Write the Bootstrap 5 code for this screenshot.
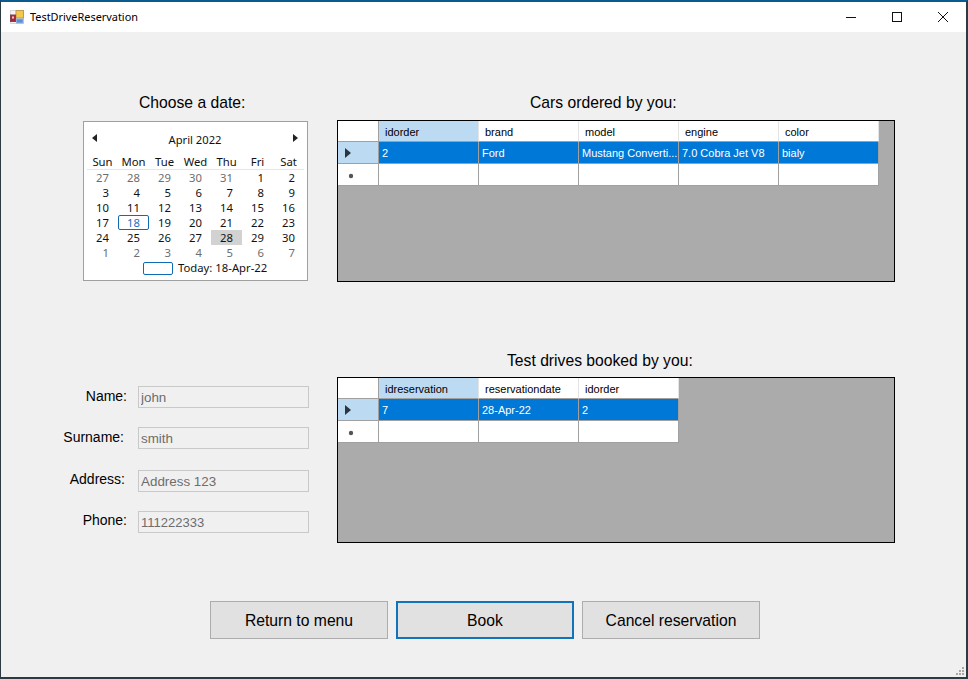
<!DOCTYPE html>
<html lang="en">
<head>
<meta charset="utf-8">
<title>TestDriveReservation</title>
<link href="https://cdn.jsdelivr.net/npm/bootstrap@5.3.0/dist/css/bootstrap.min.css" rel="stylesheet">
<style>
html,body{height:679px;margin:0;overflow:hidden;background:#f0f0f0}
body{font-family:"Liberation Sans",Arial,sans-serif;color:#000}
.win{width:968px;height:679px;border-top:2px solid #0a5c8f;border-left:1px solid #2c3a42;border-right:2px solid #2c3a42;border-bottom:2px solid #2c3a42;background:#f0f0f0;position:relative;overflow:hidden}
.tbar{height:30px;background:#fff;font-family:"Noto Sans",sans-serif;font-size:10.9px}
.tbar-ic{margin-left:9px;margin-right:6px}
.wbtns svg{display:block}
.wb{width:46px;height:30px}
.client{padding-left:82px}
.toprow{padding-top:61px;height:319px}
.botrow{height:250px;margin-left:-82px}
.leftcol{width:225px;flex:none}
.rightcol{width:558px;margin-left:29px;flex:none}
.botrow .rightcol{margin-left:27px}
.hd{font-size:15.7px;line-height:20px;height:20px;white-space:nowrap}
.hd-a{padding-left:56px;margin-bottom:8px}
.hd-b{padding-left:193px;margin-bottom:7px}
.hd-c{padding-left:170px;margin-bottom:6px}
.cal{width:225px;height:160px;background:#fff;border:1px solid #a0a0a0;padding-left:3px;font-family:"Noto Sans",sans-serif;font-size:11.3px;line-height:15px;color:#111}
.cal-t{width:216px;height:31px;padding:0 5px;font-size:11.2px}
.cal-t span{margin-top:3px}
.cal-g{display:grid;grid-template-columns:repeat(7,31px);grid-template-rows:17px repeat(6,15px)}
.cal-h{line-height:18px;text-align:center;border-bottom:1px solid #e6e6e6}
.cal-d{padding-right:9px;text-align:right}
.cal-m{color:#6d6d6d}
.cal-s{background:#d2d2d2}
.cal-n{color:#1a6fc0;border:1px solid #0f6cb4;border-radius:2px;padding-right:8px;line-height:13px}
.cal-f{height:16px;padding-left:56px;gap:5px;line-height:16px}
.cal-b{width:30px;height:13px;border:1px solid #0f6cb4;border-radius:2px;flex:none}
.dgv{background:#ababab;border:1px solid #000;width:558px}
.dgv-1{height:162px}
.dgv-2{height:166px}
.dgv table.grd{width:auto;table-layout:fixed;border-collapse:separate;border-spacing:0;margin:0;font-size:11px;--bs-table-bg:transparent;--bs-table-border-color:transparent}
.grd th,.grd td{width:100px;height:22px;padding:0 0 0 3px;background:#fff;border:0;border-right:1px solid #a0a0a0;border-bottom:1px solid #a0a0a0;font-weight:400;vertical-align:middle;white-space:nowrap;overflow:hidden;box-shadow:none;color:#000;line-height:14px}
.grd thead th{height:21px;padding:1px 0 0 6px;border-right:1px solid #e4e4e4;border-bottom:1px solid #a0a0a0}
.grd .rh{width:41px;padding:0 0 0 7px;border-right:1px solid #a0a0a0}
.grd thead th.sel,.grd tbody td.rh.sel{background:#bddaf3}
.grd tbody tr.cur td:not(.rh){background:#0078d7;color:#fff}
.newmark{margin:2px 0 0 3px}
.fields{width:309px;padding-top:35px;flex:none}
.frow{height:22px;margin-bottom:19px}
.frow-w{margin-bottom:21px}
.lbl{width:126px;font-size:14px;line-height:18px;text-align:right;flex:none;padding-bottom:2px}
.lbl-s{padding-right:3px}
.lbl-a{padding-right:2px;padding-bottom:4px}
.lbl-p{padding-bottom:4px}
.fld.form-control{width:171px;height:22px;margin-left:11px;padding:0 2px;border:1px solid #c9c9c9;border-radius:0;background:#f0f0f0;color:#6d6d6d;font-size:13.4px;line-height:20px;font-family:"Liberation Sans",Arial,sans-serif;opacity:1}
.fld.fld-p.form-control{font-size:13px}
.acts{margin-left:-82px;padding-left:209px;gap:8px}
.wbtn.btn{width:178px;height:38px;padding:1px 0 0;border:1px solid #adadad;border-radius:0;background:#e1e1e1;color:#000;font-size:15.7px;line-height:35px;--bs-btn-hover-bg:#e1e1e1}
.wbtn.wbtn-f{border:2px solid #1273ba;line-height:33px}
.grip{position:absolute;right:1px;bottom:1px}
</style>
</head>
<body>
<div class="win d-flex flex-column">
  <div class="tbar d-flex align-items-center">
    <svg class="tbar-ic" width="14" height="14" viewBox="0 0 14 14" aria-hidden="true">
      <rect x="0.5" y="0.5" width="13" height="13" fill="#f4f4f4" stroke="#d8d8d8"/>
      <rect x="6" y="0.5" width="7.5" height="7.5" fill="#f6c84a" stroke="#c09a50"/>
      <rect x="0.5" y="5" width="5" height="6.5" fill="#a82838" stroke="#8a4048"/>
      <rect x="2" y="6.5" width="2" height="2" fill="#f0d0d0"/>
      <rect x="6.5" y="9" width="6.5" height="4" fill="#5b8fd8" stroke="#8fb0dc"/>
    </svg>
    <span>TestDriveReservation</span>
    <div class="wbtns d-flex ms-auto">
      <div class="wb d-flex align-items-center justify-content-center"><svg width="10" height="10" viewBox="0 0 10 10"><path d="M0 5.5h10" stroke="#111" fill="none"/></svg></div>
      <div class="wb d-flex align-items-center justify-content-center"><svg width="10" height="10" viewBox="0 0 10 10"><rect x=".5" y=".5" width="9" height="9" stroke="#111" fill="none"/></svg></div>
      <div class="wb d-flex align-items-center justify-content-center"><svg width="10" height="10" viewBox="0 0 10 10"><path d="M0 0l10 10M10 0L0 10" stroke="#111" stroke-width="1" fill="none"/></svg></div>
    </div>
  </div>

  <div class="client flex-grow-1">
    <div class="toprow d-flex">
      <div class="leftcol">
        <div class="hd hd-a">Choose a date:</div>
        <div class="cal">
          <div class="cal-t d-flex align-items-center justify-content-between">
            <svg width="5" height="8" viewBox="0 0 5 8"><path d="M5 0v8L0 4z" fill="#222"/></svg>
            <span>April 2022</span>
            <svg width="5" height="8" viewBox="0 0 5 8"><path d="M0 0v8l5-4z" fill="#222"/></svg>
          </div>
          <div class="cal-g">
            <div class="cal-h">Sun</div><div class="cal-h">Mon</div><div class="cal-h">Tue</div><div class="cal-h">Wed</div><div class="cal-h">Thu</div><div class="cal-h">Fri</div><div class="cal-h">Sat</div>
            <div class="cal-d cal-m">27</div><div class="cal-d cal-m">28</div><div class="cal-d cal-m">29</div><div class="cal-d cal-m">30</div><div class="cal-d cal-m">31</div><div class="cal-d">1</div><div class="cal-d">2</div>
            <div class="cal-d">3</div><div class="cal-d">4</div><div class="cal-d">5</div><div class="cal-d">6</div><div class="cal-d">7</div><div class="cal-d">8</div><div class="cal-d">9</div>
            <div class="cal-d">10</div><div class="cal-d">11</div><div class="cal-d">12</div><div class="cal-d">13</div><div class="cal-d">14</div><div class="cal-d">15</div><div class="cal-d">16</div>
            <div class="cal-d">17</div><div class="cal-d cal-n">18</div><div class="cal-d">19</div><div class="cal-d">20</div><div class="cal-d">21</div><div class="cal-d">22</div><div class="cal-d">23</div>
            <div class="cal-d">24</div><div class="cal-d">25</div><div class="cal-d">26</div><div class="cal-d">27</div><div class="cal-d cal-s">28</div><div class="cal-d">29</div><div class="cal-d">30</div>
            <div class="cal-d cal-m">1</div><div class="cal-d cal-m">2</div><div class="cal-d cal-m">3</div><div class="cal-d cal-m">4</div><div class="cal-d cal-m">5</div><div class="cal-d cal-m">6</div><div class="cal-d cal-m">7</div>
          </div>
          <div class="cal-f d-flex align-items-center"><span class="cal-b"></span><span>Today: 18-Apr-22</span></div>
        </div>
      </div>
      <div class="rightcol">
        <div class="hd hd-b">Cars ordered by you:</div>
        <div class="dgv dgv-1">
          <table class="table grd">
            <thead><tr><th class="rh"></th><th class="sel">idorder</th><th>brand</th><th>model</th><th>engine</th><th>color</th></tr></thead>
            <tbody>
              <tr class="cur"><td class="rh sel"><svg width="6" height="10" viewBox="0 0 6 10" class="d-block"><path d="M0 0v10l6-5z" fill="#2a3540"/></svg></td><td>2</td><td>Ford</td><td>Mustang Converti...</td><td>7.0 Cobra Jet V8</td><td>bialy</td></tr>
              <tr><td class="rh"><svg class="newmark d-block" width="6" height="6" viewBox="0 0 6 6"><circle cx="3" cy="3" r="2.2" fill="#555"/></svg></td><td></td><td></td><td></td><td></td><td></td></tr>
            </tbody>
          </table>
        </div>
      </div>
    </div>

    <div class="botrow d-flex">
      <div class="fields">
        <div class="frow d-flex align-items-center"><label class="lbl">Name:</label><input class="form-control fld" disabled value="john"></div>
        <div class="frow frow-w d-flex align-items-center"><label class="lbl lbl-s">Surname:</label><input class="form-control fld" disabled value="smith"></div>
        <div class="frow d-flex align-items-center"><label class="lbl lbl-a">Address:</label><input class="form-control fld" disabled value="Address 123"></div>
        <div class="frow d-flex align-items-center"><label class="lbl lbl-p">Phone:</label><input class="form-control fld fld-p" disabled value="111222333"></div>
      </div>
      <div class="rightcol">
        <div class="hd hd-c">Test drives booked by you:</div>
        <div class="dgv dgv-2">
          <table class="table grd">
            <thead><tr><th class="rh"></th><th class="sel">idreservation</th><th>reservationdate</th><th>idorder</th></tr></thead>
            <tbody>
              <tr class="cur"><td class="rh sel"><svg width="6" height="10" viewBox="0 0 6 10" class="d-block"><path d="M0 0v10l6-5z" fill="#2a3540"/></svg></td><td>7</td><td>28-Apr-22</td><td>2</td></tr>
              <tr><td class="rh"><svg class="newmark d-block" width="6" height="6" viewBox="0 0 6 6"><circle cx="3" cy="3" r="2.2" fill="#555"/></svg></td><td></td><td></td><td></td></tr>
            </tbody>
          </table>
        </div>
      </div>
    </div>

    <div class="acts d-flex">
      <button type="button" class="btn wbtn">Return to menu</button>
      <button type="button" class="btn wbtn wbtn-f">Book</button>
      <button type="button" class="btn wbtn">Cancel reservation</button>
    </div>
  </div>
  <svg class="grip" width="10" height="10" viewBox="0 0 10 10" aria-hidden="true"><g fill="#a8a8a8"><rect x="7" y="1" width="2" height="2"/><rect x="4" y="4" width="2" height="2"/><rect x="7" y="4" width="2" height="2"/><rect x="1" y="7" width="2" height="2"/><rect x="4" y="7" width="2" height="2"/><rect x="7" y="7" width="2" height="2"/></g></svg>
</div>
</body>
</html>
